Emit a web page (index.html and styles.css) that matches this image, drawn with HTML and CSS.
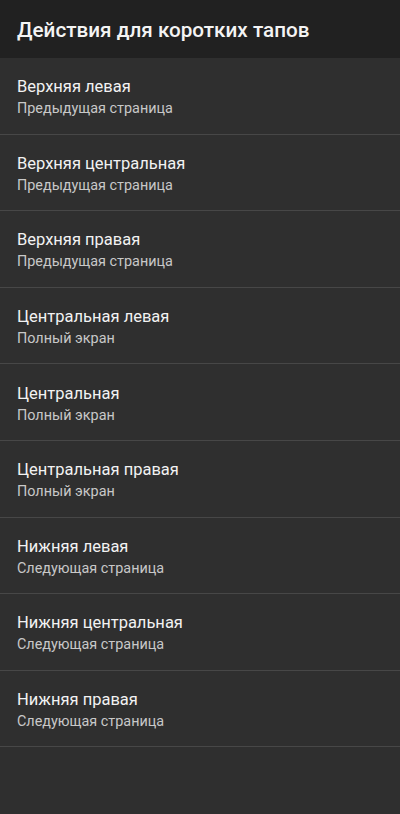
FILE: index.html
```html
<!DOCTYPE html>
<html lang="ru">
<head>
<meta charset="utf-8">
<title>Действия для коротких тапов</title>
<link rel="stylesheet" href="styles.css">
</head>
<body>
<header class="appbar"><h1 class="appbar-title">Действия для коротких тапов</h1></header>
<ul class="list">
<li class="item"><div class="item-title">Верхняя левая</div><div class="item-sub">Предыдущая страница</div></li>
<li class="item"><div class="item-title">Верхняя центральная</div><div class="item-sub">Предыдущая страница</div></li>
<li class="item"><div class="item-title">Верхняя правая</div><div class="item-sub">Предыдущая страница</div></li>
<li class="item"><div class="item-title">Центральная левая</div><div class="item-sub">Полный экран</div></li>
<li class="item"><div class="item-title">Центральная</div><div class="item-sub">Полный экран</div></li>
<li class="item"><div class="item-title">Центральная правая</div><div class="item-sub">Полный экран</div></li>
<li class="item"><div class="item-title">Нижняя левая</div><div class="item-sub">Следующая страница</div></li>
<li class="item"><div class="item-title">Нижняя центральная</div><div class="item-sub">Следующая страница</div></li>
<li class="item"><div class="item-title">Нижняя правая</div><div class="item-sub">Следующая страница</div></li>
</ul>
</body>
</html>
```
FILE: styles.css
```css
html, body {
  margin: 0;
  padding: 0;
  height: 100%;
}
body {
  background: #2f2f2f;
  font-family: Roboto, "Noto Sans", sans-serif;
  color: #ffffff;
}
.appbar {
  height: 58px;
  background: #212121;
  display: flex;
  align-items: center;
  padding: 2px 17px 0;
  box-sizing: border-box;
}
.appbar-title {
  margin: 0;
  font-size: 20.7px;
  font-weight: 500;
  color: #f4f4f4;
  letter-spacing: 0;
}
.list {
  list-style: none;
  margin: 0;
  padding: 0;
}
.item {
  height: 76.6px;
  box-sizing: border-box;
  border-bottom: 1px solid #474747;
  padding: 4px 17px 0;
  display: flex;
  flex-direction: column;
  justify-content: center;
  gap: 3px;
}
.item-title {
  font-size: 16.5px;
  line-height: 20px;
  color: #f2f2f2;
}
.item-sub {
  font-size: 14.4px;
  line-height: 18px;
  color: #c8c8c8;
}
```
